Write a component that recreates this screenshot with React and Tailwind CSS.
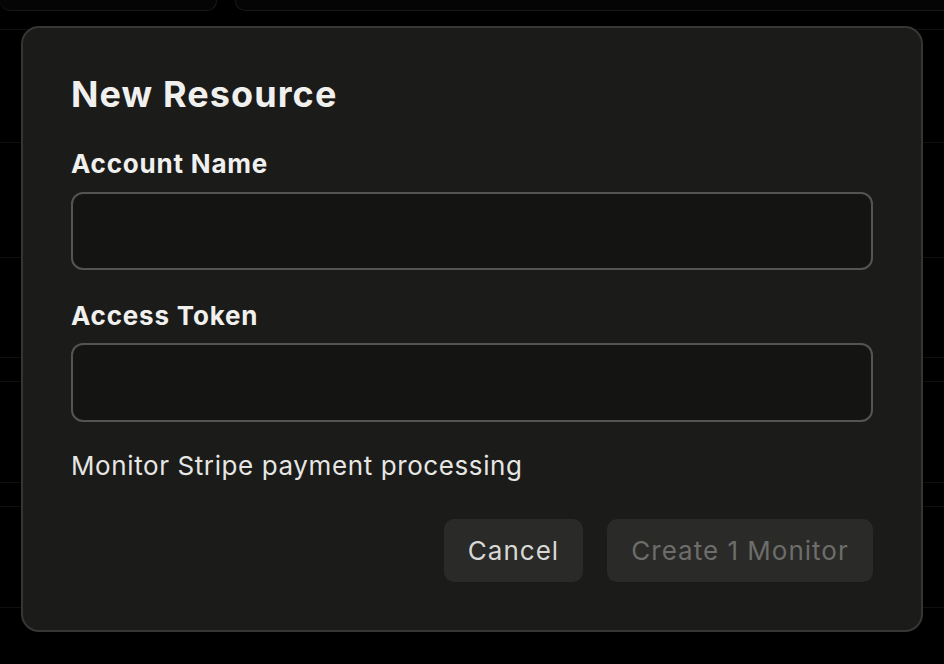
// New Resource dialog over a dimmed dashboard
const ROWS = [
  { h: 'h-[19px]' },
  { h: 'h-[113px]' },
  { h: 'h-[115px]' },
  { h: 'h-[100px]' },
  { h: 'h-[24px]' },
  { h: 'h-[101px]' },
  { h: 'h-[24px]' },
  { h: 'h-[101px]' },
];

export default function App() {
  return (
    <div className="relative w-[944px] h-[664px] overflow-hidden bg-black" style={{ fontFamily: 'Inter, "Noto Sans", sans-serif' }}>
      {/* dimmed page behind */}
      <div className="flex flex-col">
        <div className="flex h-[11px] gap-[18px]">
          <div className="w-[217px] rounded-b-[10px] border-b border-r border-[#181818] bg-[#050505]" />
          <div className="flex-1 rounded-bl-[10px] border-b border-l border-[#181818] bg-[#050505]" />
        </div>
        {ROWS.map((r, i) => (
          <div key={i} className={`${r.h} border-b border-[#101010]`} />
        ))}
      </div>

      {/* dialog */}
      <div className="absolute inset-0 flex justify-center pt-[26px]">
        <div className="w-[902px] h-[606px] rounded-[18px] border-2 border-[#363634] bg-[#1b1b1a] px-[48px] pt-[46px] pb-[48px] flex flex-col">
          <h2 className="text-[36px] leading-[40px] font-bold text-[#f0f0ee] tracking-[1.1px]">New Resource</h2>

          <label className="mt-[34px] text-[26px] leading-[32px] font-bold text-[#f0f0ee] tracking-[0.8px]">Account Name</label>
          <input className="mt-[12px] h-[78px] w-full rounded-[12px] border-2 border-[#545452] bg-[#141413] px-4 text-[26px] text-[#f0f0ee] outline-none" />

          <label className="mt-[30px] text-[26px] leading-[32px] font-bold text-[#f0f0ee] tracking-[0.8px]">Access Token</label>
          <input className="mt-[11px] h-[79px] w-full rounded-[12px] border-2 border-[#545452] bg-[#141413] px-4 text-[26px] text-[#f0f0ee] outline-none" />

          <p className="mt-[26px] text-[26px] leading-[36px] text-[#e6e6e3] tracking-[0.6px]">Monitor Stripe payment processing</p>

          <div className="mt-[35px] flex justify-end gap-[24px]">
            <button className="h-[63px] w-[139px] rounded-[10px] bg-[#2a2a29] text-[26px] text-[#d8d8d4] tracking-[1px]">Cancel</button>
            <button disabled className="h-[63px] w-[266px] rounded-[10px] bg-[#2a2a29] text-[26px] text-[#6d6d6a] tracking-[1px]">Create 1 Monitor</button>
          </div>
        </div>
      </div>
    </div>
  );
}
